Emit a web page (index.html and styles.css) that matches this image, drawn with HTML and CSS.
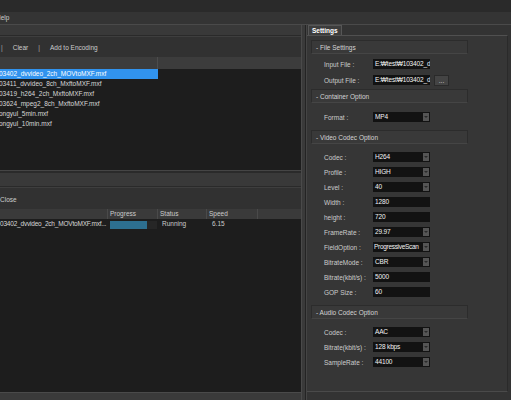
FILE: index.html
```html
<!DOCTYPE html>
<html lang="en">
<head>
    <meta charset="UTF-8">
    <meta name="viewport" content="width=device-width, initial-scale=1.0">
    <title>Encoder</title>
    <link rel="stylesheet" href="styles.css">
</head>
<body>
    <div class="app">
        <div class="titlebar"></div>
        <div class="menubar"><span class="menu-item">Help</span></div>

        <div class="workspace">
            <div class="left">
                <!-- source files -->
                <section class="dock dock-files">
                    <div class="dock-title"></div>
                    <div class="toolbar">
                        <span class="tool-sep">|</span>
                        <span class="tool">Clear</span>
                        <span class="tool-sep">|</span>
                        <span class="tool">Add to Encoding</span>
                    </div>
                    <div class="list">
                        <div class="list-head">
                            <span class="head-cell head-name"></span>
                            <span class="head-cell head-rest"></span>
                        </div>
                        <div class="list-body">
                            <div class="file-row selected"><span class="file-name">03402_dvvideo_2ch_MOVtoMXF.mxf</span></div>
                            <div class="file-row"><span class="file-name">03411_dvvideo_8ch_MxftoMXF.mxf</span></div>
                            <div class="file-row"><span class="file-name">03419_h264_2ch_MxftoMXF.mxf</span></div>
                            <div class="file-row"><span class="file-name">03624_mpeg2_8ch_MxftoMXF.mxf</span></div>
                            <div class="file-row"><span class="file-name">ongyul_5min.mxf</span></div>
                            <div class="file-row"><span class="file-name">ongyul_10min.mxf</span></div>
                        </div>
                    </div>
                </section>

                <div class="splitter"></div>

                <!-- encoding jobs -->
                <section class="dock dock-jobs">
                    <div class="dock-title"></div>
                    <div class="toolbar toolbar-jobs">
                        <span class="tool">Close</span>
                    </div>
                    <div class="list">
                        <div class="job-head">
                            <span class="job-cell c-name"></span>
                            <span class="job-cell c-progress">Progress</span>
                            <span class="job-cell c-status">Status</span>
                            <span class="job-cell c-speed">Speed</span>
                            <span class="job-cell c-rest"></span>
                        </div>
                        <div class="list-body">
                            <div class="job-row">
                                <span class="job-cell c-name">03402_dvvideo_2ch_MOVtoMXF.mxf...</span>
                                <span class="job-cell c-progress">
                                    <span class="progress"><span class="progress-fill" style="width: 78%"></span></span>
                                </span>
                                <span class="job-cell c-status">Running</span>
                                <span class="job-cell c-speed">6.15</span>
                                <span class="job-cell c-rest"></span>
                            </div>
                        </div>
                    </div>
                </section>
                <div class="statusbar"></div>
            </div>

            <div class="divider"></div>

            <div class="right">
                <div class="tabbar">
                    <span class="tab active">Settings</span>
                </div>
                <div class="tab-pane">
                    <div class="group group-file">
                        <div class="group-head">- File Settings</div>
                        <div class="group-body">
                            <div class="field">
                                <span class="label">Input File :</span>
                                <span class="input">E:₩test₩103402_d</span>
                            </div>
                            <div class="field">
                                <span class="label">Output File :</span>
                                <span class="input">E:₩test₩103402_d</span>
                                <span class="btn">...</span>
                            </div>
                        </div>
                    </div>

                    <div class="group group-container">
                        <div class="group-head">- Container Option</div>
                        <div class="group-body">
                            <div class="field">
                                <span class="label">Format :</span>
                                <span class="input combo">MP4<i class="arrow"></i></span>
                            </div>
                        </div>
                    </div>

                    <div class="group">
                        <div class="group-head">- Video Codec Option</div>
                        <div class="group-body">
                            <div class="field"><span class="label">Codec :</span><span class="input combo">H264<i class="arrow"></i></span></div>
                            <div class="field"><span class="label">Profile :</span><span class="input combo">HIGH<i class="arrow"></i></span></div>
                            <div class="field"><span class="label">Level :</span><span class="input combo">40<i class="arrow"></i></span></div>
                            <div class="field"><span class="label">Width :</span><span class="input">1280</span></div>
                            <div class="field"><span class="label">height :</span><span class="input">720</span></div>
                            <div class="field"><span class="label">FrameRate :</span><span class="input combo">29.97<i class="arrow"></i></span></div>
                            <div class="field"><span class="label">FieldOption :</span><span class="input combo tight">ProgressiveScan<i class="arrow"></i></span></div>
                            <div class="field"><span class="label">BitrateMode :</span><span class="input combo">CBR<i class="arrow"></i></span></div>
                            <div class="field"><span class="label">Bitrate(kbit/s) :</span><span class="input">5000</span></div>
                            <div class="field"><span class="label">GOP Size :</span><span class="input">60</span></div>
                        </div>
                    </div>

                    <div class="group">
                        <div class="group-head">- Audio Codec Option</div>
                        <div class="group-body">
                            <div class="field"><span class="label">Codec :</span><span class="input combo">AAC<i class="arrow"></i></span></div>
                            <div class="field"><span class="label">Bitrate(kbit/s) :</span><span class="input combo">128 kbps<i class="arrow"></i></span></div>
                            <div class="field"><span class="label">SampleRate :</span><span class="input combo">44100<i class="arrow"></i></span></div>
                        </div>
                    </div>
                </div>
            </div>
        </div>
    </div>
</body>
</html>
```

FILE: styles.css
```css
body {
    margin: 0;
    background-color: #333333;
    color: #cccccc;
    font-family: "Liberation Sans", Arial, sans-serif;
    font-size: 6.5px;
}

.app {
    width: 511px;
    height: 400px;
    overflow: hidden;
    display: flex;
    flex-direction: column;
}

.titlebar {
    height: 12px;
    background-color: #2a2a2a;
}

.menubar {
    height: 12px;
    line-height: 12px;
    background-color: #343434;
    border-bottom: 1px solid #4a4a4a;
    overflow: hidden;
}

.menu-item {
    margin-left: -4px;
}

.workspace {
    flex: 1;
    display: flex;
    min-height: 0;
}

/* left side */

.left {
    width: 301px;
    display: flex;
    flex-direction: column;
    border-right: 1px solid #4a4a4a;
}

.dock {
    display: flex;
    flex-direction: column;
    background-color: #313131;
}

.dock-files {
    height: 145px;
}

.dock-jobs {
    flex: 1;
    min-height: 0;
}

.dock-title {
    height: 10px;
    background-color: #393939;
    border-bottom: 1px solid #2a2a2a;
}

.dock-jobs .dock-title {
    height: 13px;
}

.toolbar {
    height: 21px;
    display: flex;
    align-items: center;
    gap: 10px;
    padding-left: 1px;
    border-top: 1px solid #3e3e3e;
    box-sizing: border-box;
}

.toolbar-jobs {
    height: 22px;
    padding-left: 0;
    padding-top: 1px;
}

.tool-sep {
    color: #aaaaaa;
}

.list {
    flex: 1;
    display: flex;
    flex-direction: column;
    min-height: 0;
}

.list-head {
    height: 12px;
    display: flex;
    background-color: #3c3c3c;
}

.head-cell {
    display: block;
    box-sizing: border-box;
}

.head-name {
    width: 158px;
    border-right: 1px solid #4c4c4c;
}

.head-rest {
    flex: 1;
}

.list-body {
    flex: 1;
    background-color: #1d1d1d;
    overflow: hidden;
}

.file-row {
    width: 158px;
    height: 10px;
    line-height: 10px;
    white-space: nowrap;
    overflow: hidden;
    color: #d8d8d8;
}

.file-name {
    display: block;
    margin-left: -1px;
}

.file-row.selected {
    background-color: #3193ee;
    color: #ffffff;
}

.splitter {
    height: 2px;
    background-color: #2a2a2a;
    border-top: 1px solid #454545;
}

.job-head,
.job-row {
    display: flex;
    height: 10px;
    line-height: 10px;
}

.job-head {
    background-color: #3a3a3a;
}

.job-cell {
    display: block;
    box-sizing: border-box;
    white-space: nowrap;
    overflow: hidden;
}

.job-head .job-cell {
    border-right: 1px solid #4a4a4a;
    padding-left: 2px;
}

.job-head .c-rest {
    border-right: none;
}

.c-name { width: 108px; }
.c-progress { width: 50px; }
.c-status { width: 49px; }
.c-speed { width: 51px; }
.c-rest { flex: 1; }

.job-row .c-name {
    padding-left: 0;
    letter-spacing: -0.2px;
    color: #d8d8d8;
}

.job-row .c-progress {
    padding: 2px 1px 0 2px;
}

.job-row .c-status {
    padding-left: 4px;
}

.job-row .c-speed {
    padding-left: 5px;
}

.progress {
    display: block;
    height: 8px;
    background-color: #262626;
}

.progress-fill {
    display: block;
    height: 100%;
    background-color: #2d6f90;
}

.statusbar {
    height: 7px;
    background-color: #3a3a3a;
    border-top: 1px solid #4a4a4a;
}

.divider {
    width: 3px;
    background-color: #3a3a3a;
    border-right: 1px solid #242424;
}

/* right side */

.right {
    flex: 1;
    display: flex;
    flex-direction: column;
    background-color: #333333;
    border-left: 1px solid #454545;
}

.tabbar {
    height: 10px;
    display: flex;
    padding-left: 1px;
}

.tab {
    padding: 0 3px;
    line-height: 10px;
    color: #ffffff;
    font-weight: bold;
    background-color: #3d3d3d;
    border: 1px solid #565656;
    border-bottom: none;
}

.tab-pane {
    flex: 1;
    margin-right: 3px;
    margin-bottom: 8px;
    padding: 4px 0 0 4px;
    background-color: #363636;
    border-top: 1px solid #505050;
    border-right: 1px solid #2a2a2a;
    border-bottom: 1px solid #4a4a4a;
}

.group {
    width: 157px;
}

.group-head {
    height: 14px;
    line-height: 13px;
    padding-left: 4px;
    box-sizing: border-box;
    background-color: #393939;
    border: 1px solid #2c2c2c;
    border-bottom-color: #454545;
    color: #d4d4d4;
}

.group-body {
    display: flex;
    flex-direction: column;
    gap: 5px;
    padding: 8px 0 8px 13px;
}

.group-file .group-body {
    gap: 6px;
    padding-top: 5px;
    padding-bottom: 4px;
}

.group-container .group-body {
    padding-top: 9px;
}

.field {
    display: flex;
    align-items: center;
    height: 10px;
}

.label {
    width: 49px;
    flex: none;
    color: #cccccc;
}

.input {
    position: relative;
    width: 57px;
    height: 10px;
    line-height: 10px;
    padding-left: 2px;
    box-sizing: border-box;
    background-color: #121212;
    color: #f2f2f2;
    white-space: nowrap;
    overflow: hidden;
    letter-spacing: -0.15px;
}

.combo {
    padding-right: 8px;
}

.combo.tight {
    padding-left: 1px;
    padding-right: 7px;
    letter-spacing: -0.3px;
}

.arrow {
    position: absolute;
    right: 1px;
    top: 1px;
    width: 6px;
    height: 8px;
    background-color: #555555;
}

.arrow::after {
    content: "";
    position: absolute;
    left: 1px;
    top: 3px;
    border-left: 2px solid transparent;
    border-right: 2px solid transparent;
    border-top: 2px solid #2a2a2a;
}

.btn {
    margin-left: 4px;
    width: 15px;
    height: 11px;
    line-height: 9px;
    text-align: center;
    box-sizing: border-box;
    background-color: #444444;
    border: 1px solid #2a2a2a;
    color: #dddddd;
}
```
